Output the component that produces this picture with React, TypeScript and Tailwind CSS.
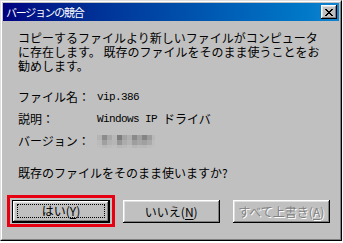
import React from "react";

const jp = { fontFamily: '"Noto Sans CJK JP", "Noto Sans", sans-serif' };
const mono = { fontFamily: '"Liberation Mono", "Noto Sans CJK JP", monospace' };

function Mosaic() {
  const cells: [number, number, string][] = [
    [0, 0, "#b4b4b4"], [5, 0, "#8c8c8c"], [10, 0, "#a8a8a8"], [15, 0, "#b8b8b8"], [20, 0, "#7c7c7c"], [25, 0, "#a4a4a4"], [30, 0, "#b0b0b0"], [35, 0, "#8a8a8a"], [40, 0, "#a0a0a0"], [45, 0, "#848484"], [50, 0, "#9c9c9c"], [55, 0, "#b8b8b8"],
    [0, 5, "#bababa"], [5, 5, "#a0a0a0"], [10, 5, "#b2b2b2"], [15, 5, "#b6b6b6"], [20, 5, "#969696"], [25, 5, "#acacac"], [30, 5, "#b4b4b4"], [35, 5, "#9e9e9e"], [40, 5, "#a6a6a6"], [45, 5, "#a0a0a0"], [50, 5, "#aaaaaa"], [55, 5, "#bcbcbc"],
    [0, 10, "#bebebe"], [5, 10, "#b8b8b8"], [10, 10, "#bcbcbc"], [15, 10, "#bebebe"], [20, 10, "#b6b6b6"], [25, 10, "#bababa"], [30, 10, "#bebebe"], [35, 10, "#b6b6b6"], [40, 10, "#bababa"], [45, 10, "#b8b8b8"], [50, 10, "#bcbcbc"], [55, 10, "#bebebe"],
  ];
  return (
    <svg width="58" height="13" viewBox="0 0 58 13" shapeRendering="crispEdges">
      {cells.map(([x, y, c], i) => (
        <rect key={i} x={x} y={y} width="5" height={y === 10 ? 3 : 5} fill={c} />
      ))}
    </svg>
  );
}

function CloseIcon() {
  return (
    <svg width="8" height="7" viewBox="0 0 8 7" shapeRendering="crispEdges">
      <path
        d="M0 0h2v1h-2z M6 0h2v1h-2z M1 1h2v1h-2z M5 1h2v1h-2z M2 2h4v1h-4z M3 3h2v1h-2z M2 4h4v1h-4z M1 5h2v1h-2z M5 5h2v1h-2z M0 6h2v1h-2z M6 6h2v1h-2z"
        fill="#000"
      />
    </svg>
  );
}

export default function App() {
  return (
    <div className="w-[343px] h-[243px] bg-white" style={jp}>
      <div className="w-[342px] h-[241px] border border-t-[#dfdfdf] border-l-[#dfdfdf] border-r-black border-b-black">
        <div className="h-full border border-t-white border-l-white border-r-[#808080] border-b-[#808080] bg-[#c0c0c0] p-px flex flex-col">
          {/* Title bar */}
          <div className="h-[18px] flex items-center bg-linear-to-r from-[#000080] to-[#1084d0]">
            <span className="pl-[3px] text-white text-[11px] leading-[18px] tracking-[-1.3px]">
              バージョンの競合
            </span>
            <div className="ml-auto mr-[2px] w-[16px] h-[14px] bg-[#c0c0c0] flex items-center justify-center shadow-[inset_-1px_-1px_#000,inset_1px_1px_#fff,inset_-2px_-2px_#808080,inset_2px_2px_#dfdfdf]">
              <CloseIcon />
            </div>
          </div>

          {/* Body */}
          <div className="flex flex-col px-[9px] text-black text-[12px]">
            <p className="mt-[10px] pl-[6px] leading-[14px] whitespace-nowrap">
              コピーするファイルより新しいファイルがコンピュータ
              <br />
              に存在します。 既存のファイルをそのまま使うことをお
              <br />
              勧めします。
            </p>

            <div className="mt-[13px] pl-[6px] flex flex-col">
              <div className="h-[22px] flex items-center">
                <span className="w-[79px] whitespace-nowrap">ファイル名：</span>
                <span className="text-[11px] tracking-[-0.6px]" style={mono}>vip.386</span>
              </div>
              <div className="h-[22px] flex items-center">
                <span className="w-[79px] whitespace-nowrap">説明：</span>
                <span className="text-[11px] tracking-[-0.6px] whitespace-pre" style={mono}>Windows IP </span>
                <span className="text-[12px]">ドライバ</span>
              </div>
              <div className="h-[22px] flex items-center">
                <span className="w-[79px] whitespace-nowrap">バージョン：</span>
                <Mosaic />
              </div>
            </div>

            <p className="mt-[14px] pl-[6px] leading-[14px]">既存のファイルをそのまま使いますか?</p>

            <div className="mt-[20px] flex gap-[13px]">
              <div className="relative">
                <div className="w-[98px] h-[23px] border border-black bg-[#c0c0c0] pt-[3px] pr-[4px] pb-[4px] pl-[4px] flex shadow-[inset_-1px_-1px_#000,inset_1px_1px_#fff,inset_-2px_-2px_#808080,inset_2px_2px_#dfdfdf]">
                  <div className="flex-1 border border-dotted border-black flex items-center justify-center text-[12px] leading-none">
                    はい(<span className="underline underline-offset-2">Y</span>)
                  </div>
                </div>
                <div className="absolute left-[-5px] top-[-5px] right-[-5px] bottom-[-4px] border-[3px] border-[#e60012]" />
              </div>
              <div className="w-[98px] h-[23px] bg-[#c0c0c0] flex items-center justify-center text-[12px] leading-none shadow-[inset_-1px_-1px_#000,inset_1px_1px_#fff,inset_-2px_-2px_#808080,inset_2px_2px_#dfdfdf]">
                いいえ(<span className="underline underline-offset-2">N</span>)
              </div>
              <div className="w-[99px] h-[23px] bg-[#c0c0c0] flex items-center justify-center text-[12px] leading-none text-[#808080] [text-shadow:1px_1px_0_#ffffff] shadow-[inset_-1px_-1px_#000,inset_1px_1px_#fff,inset_-2px_-2px_#808080,inset_2px_2px_#dfdfdf]">
                すべて上書き(<span className="underline underline-offset-2">A</span>)
              </div>
            </div>
          </div>
        </div>
      </div>
    </div>
  );
}
